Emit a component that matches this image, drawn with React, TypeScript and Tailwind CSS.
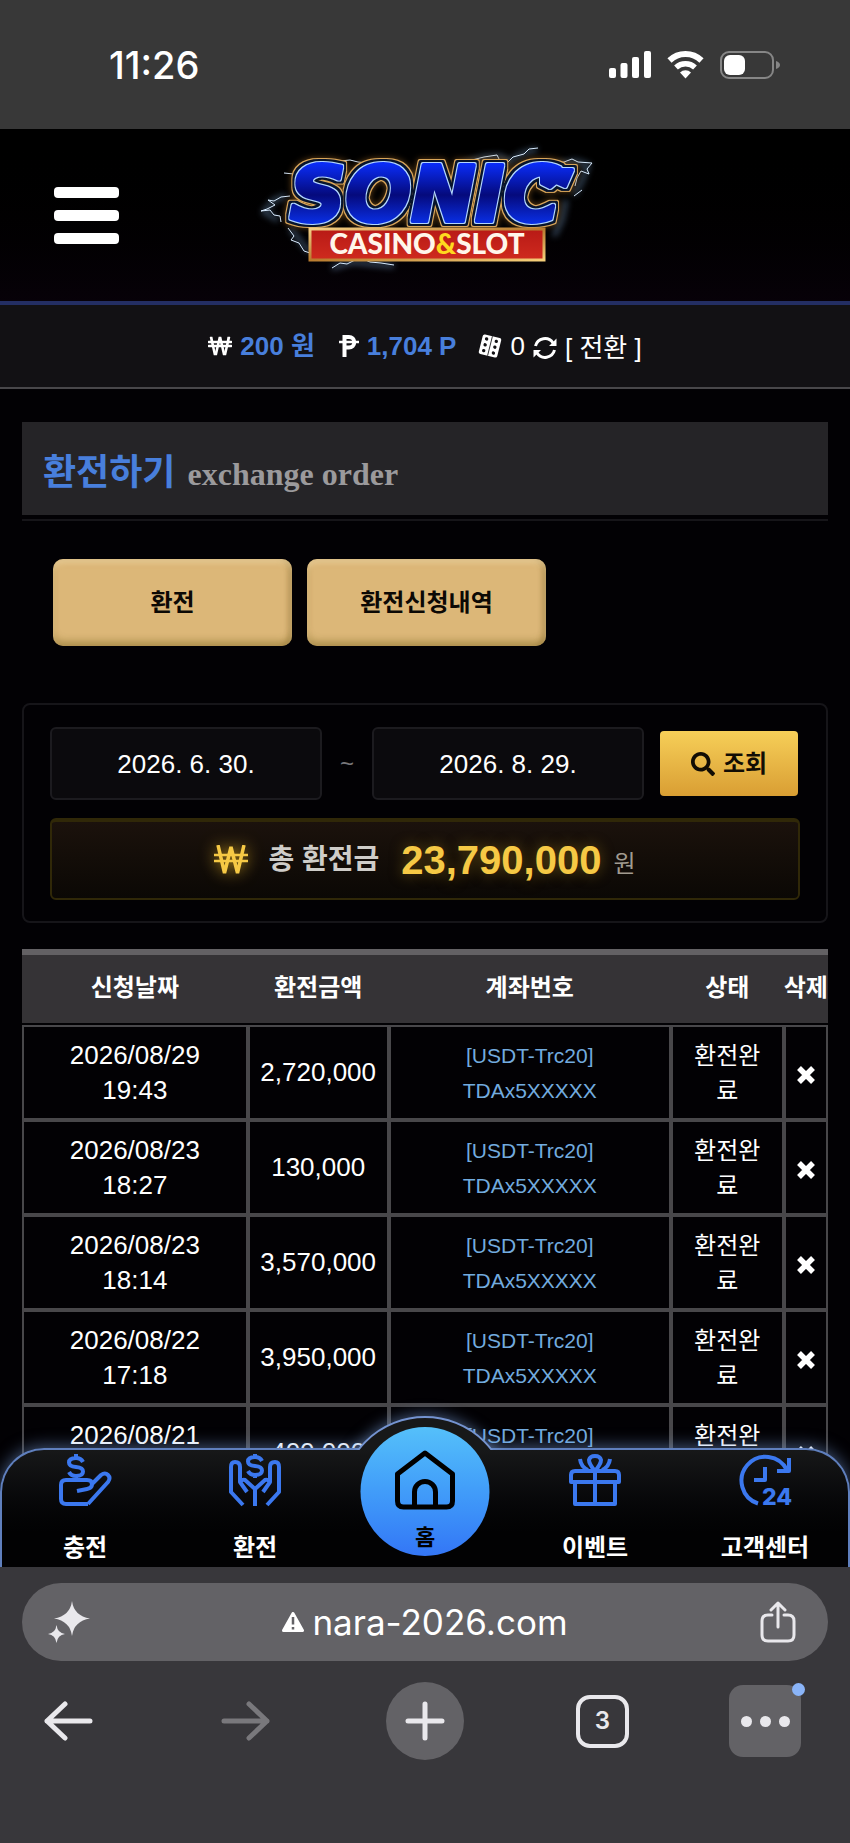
import type { ReactNode } from "react";
import { FaSearch, FaWonSign } from "react-icons/fa";

const WITHDRAWALS = [
  { date: "2026/08/29", time: "19:43", amount: "2,720,000" },
  { date: "2026/08/23", time: "18:27", amount: "130,000" },
  { date: "2026/08/23", time: "18:14", amount: "3,570,000" },
  { date: "2026/08/22", time: "17:18", amount: "3,950,000" },
  { date: "2026/08/21", time: "16:52", amount: "400,000" },
];

const COLUMNS = [
  { label: "신청날짜", width: "w-[28%]" },
  { label: "환전금액", width: "w-[17.5%]" },
  { label: "계좌번호", width: "w-[35%]" },
  { label: "상태", width: "w-[14%]" },
  { label: "삭제", width: "w-[5.5%]" },
];

const CELL = "h-[95px] border-2 border-[#48474a] p-0 text-center";

function StatusBar() {
  return (
    <div className="flex h-[129px] shrink-0 items-center justify-between bg-[#383838] pl-[109px] pr-[70px] font-['Inter','Liberation_Sans',sans-serif] text-white">
      <span className="text-[38px] font-medium leading-none">11:26</span>
      <div className="flex items-center gap-4">
        <svg viewBox="0 0 42 28" className="h-7 w-[42px]" fill="currentColor" aria-hidden="true">
          <rect x="0" y="17" width="7" height="10" rx="2" />
          <rect x="11.500" y="12" width="7" height="15" rx="2" />
          <rect x="23" y="6" width="7" height="21" rx="2" />
          <rect x="35" y="0" width="7" height="27" rx="2" />
        </svg>
        <svg viewBox="0 0 37 28" className="h-7 w-[37px]" fill="none" aria-hidden="true">
          <path d="M2.500 9.500a23 23 0 0 1 32 0" stroke="currentColor" strokeWidth="6" />
          <path d="M9 16.500a14 14 0 0 1 19 0" stroke="currentColor" strokeWidth="5.500" />
          <path d="M13 21.500a8 8 0 0 1 11 0L18.500 27.500z" fill="currentColor" />
        </svg>
        <svg viewBox="0 0 60 28" className="h-7 w-[60px]" aria-hidden="true">
          <rect x="1" y="1" width="52" height="26" rx="8" fill="none" stroke="#868686" strokeWidth="2" />
          <rect x="4" y="4" width="21" height="20" rx="6" fill="white" />
          <path d="M56 10q4 1.500 4 4t-4 4z" fill="#868686" />
        </svg>
      </div>
    </div>
  );
}

function Logo() {
  return (
    <svg viewBox="0 0 370 170" className="h-[170px] w-[370px]" role="img" aria-label="Sonic Casino & Slot">
      <defs>
        <linearGradient id="logoBlue" gradientUnits="userSpaceOnUse" x1="0" y1="34" x2="0" y2="96">
          <stop offset="0" stopColor="#0a2cf5" />
          <stop offset="0.5" stopColor="#050a7c" />
          <stop offset="1" stopColor="#0a32ee" />
        </linearGradient>
        <linearGradient id="logoGold" x1="0" y1="0" x2="1" y2="1">
          <stop offset="0" stopColor="#f3cf85" />
          <stop offset="0.5" stopColor="#b87a2e" />
          <stop offset="1" stopColor="#f5cf7a" />
        </linearGradient>
        <linearGradient id="logoRed" x1="0" y1="0" x2="0" y2="1">
          <stop offset="0" stopColor="#b81a16" />
          <stop offset="1" stopColor="#cf2a1e" />
        </linearGradient>
        <filter id="logoGlow" x="-20%" y="-20%" width="140%" height="140%">
          <feGaussianBlur stdDeviation="3" />
        </filter>
        {/* rings round the lettering: light blue, navy, gold, then a warm glow */}
        <filter id="logoOutline" x="-10%" y="-30%" width="120%" height="160%" colorInterpolationFilters="sRGB">
          <feMorphology in="SourceAlpha" operator="dilate" radius="1" result="a1" />
          <feMorphology in="SourceAlpha" operator="dilate" radius="3" result="a2" />
          <feMorphology in="SourceAlpha" operator="dilate" radius="4" result="a3" />
          <feGaussianBlur in="a3" stdDeviation="3" result="a4" />
          <feFlood floodColor="#b3d6ff" />
          <feComposite in2="a1" operator="in" result="light" />
          <feFlood floodColor="#07142c" />
          <feComposite in2="a2" operator="in" result="navy" />
          <feFlood floodColor="#d9a65a" />
          <feComposite in2="a3" operator="in" result="gold" />
          <feFlood floodColor="#8a5a20" floodOpacity="0.7" />
          <feComposite in2="a4" operator="in" result="glow" />
          <feMerge>
            <feMergeNode in="glow" />
            <feMergeNode in="gold" />
            <feMergeNode in="navy" />
            <feMergeNode in="light" />
            <feMergeNode in="SourceGraphic" />
          </feMerge>
        </filter>
      </defs>

      {/* lightning behind the lettering */}
      <g fill="none" stroke="#7da7d4" strokeWidth="4" filter="url(#logoGlow)" opacity="0.5">
        <path d="M218 36l26-9 16-1 9 6 12-8 16-5M46 66l-12 4-10 12 14 8M50 98l14 18 6 6M92 138l20-6 20 2 22 2" />
        <path d="M318 34l18-3 12 4-6 16-8 14M326 70l-4 20-8 16" />
      </g>
      <g fill="none" stroke="#d9ecff" strokeWidth="1">
        <path d="M218 36l14-6 12-3 13-2 3 6 8 1 5-5 11-3 5-5 9-1" />
        <path d="M50 66l-9 1-7 4-6-1 7 5-8 4-6 2 9-1 4 5 6 1 1 6" />
        <path d="M48 98l6 8-3 4 8 3 5 8 6 2M92 138l8-5 7 1 8-4 6-2 9 4 11 1 13 2" />
        <path d="M310 34l14-2 8-3 6 3 14 1-5 6 2 5-8-3-4 7-2 8M100 31l10-1 8 2 10 1M44 43l10 1M66 30l4 6M342 60l-8 6" />
      </g>

      <g
        filter="url(#logoOutline)"
        fill="url(#logoBlue)"
        stroke="url(#logoBlue)"
        strokeWidth="4"
        strokeLinejoin="round"
      >
        <text
          x="50"
          y="91"
          fontFamily="'DejaVu Sans', sans-serif"
          fontWeight="700"
          fontStyle="italic"
          fontSize="77"
        >
          SONIC
        </text>
        <path d="M302 40h30l-7 16-9-4-6 5-8-4z" />
      </g>

      <rect x="70" y="99" width="234" height="31" fill="url(#logoRed)" stroke="url(#logoGold)" strokeWidth="3" />
      <text
        x="187"
        y="124"
        textAnchor="middle"
        fontFamily="Lato, 'Liberation Sans', sans-serif"
        fontWeight="900"
        fontSize="28"
        fill="#fff6ea"
      >
        CASINO<tspan fill="#ffd91f">&amp;</tspan>SLOT
      </text>
    </svg>
  );
}

function Header() {
  return (
    <header className="grid h-[176px] shrink-0 grid-cols-[1fr_auto_1fr] items-center border-b-4 border-[#232e63] bg-linear-to-b from-black to-[#070108] pl-[54px]">
      <button type="button" aria-label="메뉴" className="flex w-[65px] flex-col gap-3">
        <span className="h-[11px] w-full rounded-sm bg-white" />
        <span className="h-[11px] w-full rounded-sm bg-white" />
        <span className="h-[11px] w-full rounded-sm bg-white" />
      </button>
      <a href="#home" className="block pr-[54px]">
        <Logo />
      </a>
    </header>
  );
}

function PointIcon() {
  return (
    <svg viewBox="0 0 20 22" className="h-[22px] w-5" fill="none" stroke="currentColor" aria-hidden="true">
      <path d="M5.500 22V2H10a5 5 0 0 1 0 10.500H5" strokeWidth="4" />
      <path d="M0 7h20" strokeWidth="2.500" />
    </svg>
  );
}

function DiceIcon() {
  return (
    <svg viewBox="0 0 24 24" className="h-6 w-6" aria-hidden="true">
      <g transform="rotate(14 12 12)">
        <rect x="2.500" y="2" width="19" height="20" rx="2" fill="white" />
        <path d="M12 2v20" stroke="#121114" strokeWidth="0.800" />
        <g fill="#121114">
          <circle cx="7" cy="6" r="1.700" />
          <circle cx="7" cy="12" r="1.700" />
          <circle cx="7" cy="18" r="1.700" />
          <circle cx="17" cy="6" r="1.700" />
          <circle cx="17" cy="12" r="1.700" />
          <circle cx="17" cy="18" r="1.700" />
        </g>
      </g>
    </svg>
  );
}

function ConvertIcon() {
  return (
    <svg viewBox="0 0 24 24" className="h-6 w-6" fill="none" stroke="currentColor" strokeWidth="3" aria-hidden="true">
      <path d="M2.500 10A9.700 9.700 0 0 1 20 7" />
      <path d="M21.500 14A9.700 9.700 0 0 1 4 17" />
      <path d="M23.500 2.500V10H16zM.5 21.500V14H8z" fill="currentColor" stroke="none" />
    </svg>
  );
}

function DeleteIcon() {
  return (
    <svg viewBox="0 0 18 18" className="h-[18px] w-[18px]" stroke="currentColor" strokeWidth="5.500" aria-hidden="true">
      <path d="M2 2l14 14M16 2L2 16" />
    </svg>
  );
}

function BalanceBar() {
  return (
    <div className="flex h-[84px] shrink-0 items-center justify-center border-b-2 border-[#48474a] bg-[#121114] text-[26px] text-white">
      <FaWonSign className="h-6 w-6" />
      <span className="ml-2 font-bold text-[#487fdc]">200 원</span>
      <span className="ml-6">
        <PointIcon />
      </span>
      <span className="ml-2 font-bold text-[#487fdc]">1,704 P</span>
      <span className="ml-[22px]">
        <DiceIcon />
      </span>
      <span className="ml-2">0</span>
      <button type="button" className="ml-2 flex items-center gap-2 pt-1">
        <ConvertIcon />
        <span>[ 전환 ]</span>
      </button>
    </div>
  );
}

function TabButton({ children }: { children: ReactNode }) {
  return (
    <button
      type="button"
      className="h-[87px] w-[239px] rounded-[10px] bg-[#dcb778] text-[24px] font-bold text-[#0c0905] shadow-[inset_0_4px_5px_rgba(255,240,200,0.35),inset_0_-6px_6px_rgba(120,100,30,0.35),inset_-4px_0_5px_rgba(120,90,30,0.3)]"
    >
      {children}
    </button>
  );
}

function DateInput({ label, value }: { label: string; value: string }) {
  return (
    <input
      type="text"
      aria-label={label}
      defaultValue={value}
      className="h-[73px] min-w-0 flex-1 rounded-md border-2 border-[#1c1b1f] bg-[#0b0a0d] pt-0.5 text-center text-[26px] text-white"
    />
  );
}

function SearchPanel() {
  return (
    <section className="mt-[57px] rounded-lg border-2 border-[#161519] px-[26px] pb-[21px] pt-[22px]">
      <form className="flex items-center pr-0.5">
        <DateInput label="시작일" value="2026. 6. 30." />
        <span className="w-[50px] text-center text-[24px] text-[#77767a]">~</span>
        <DateInput label="종료일" value="2026. 8. 29." />
        <button
          type="button"
          className="ml-4 flex h-[65px] w-[138px] items-center justify-center gap-2 rounded-sm bg-linear-to-b from-[#f6cf58] to-[#d99e33] text-[24px] font-bold text-[#120d04]"
        >
          <FaSearch className="h-6 w-6" />
          조회
        </button>
      </form>
      <div className="mt-[18px] flex h-[82px] items-center justify-center rounded-md border-2 border-t-4 border-[#302808] bg-linear-to-b from-[#1b120c] to-[#0b0805]">
        <svg
          viewBox="0 0 34 30"
          className="h-[30px] w-[34px] drop-shadow-[0_0_8px_#b98f1e]"
          fill="none"
          stroke="#f6c945"
          strokeWidth="3.500"
          aria-hidden="true"
        >
          <path d="M4 0l6.500 28L17 2l6.500 26L30 0" strokeLinejoin="bevel" />
          <path d="M0 10h34M0 16h34" strokeWidth="2.500" />
        </svg>
        <span className="ml-5 text-[28px] font-bold text-[#cfcdc9]">총 환전금</span>
        <span className="ml-[22px] text-[40px] font-bold text-[#f6c945] [text-shadow:0_0_14px_rgba(185,143,30,0.5)]">
          23,790,000
        </span>
        <span className="ml-3 mt-2 text-[24px] text-[#a19b90]">원</span>
      </div>
    </section>
  );
}

function HistoryTable() {
  return (
    <table className="mt-[26px] w-full table-fixed border-separate border-spacing-0 text-white">
      <thead>
        <tr>
          {COLUMNS.map((col) => (
            <th
              key={col.label}
              className={`${col.width} h-[74px] whitespace-nowrap border-t-[6px] border-[#636164] bg-[#353336] p-0 pb-0.5 text-[24px] font-bold`}
            >
              {col.label}
            </th>
          ))}
        </tr>
        <tr aria-hidden="true">
          <td colSpan={5} className="h-[2px] p-0" />
        </tr>
      </thead>
      <tbody>
        {WITHDRAWALS.map((row) => (
          <tr key={`${row.date} ${row.time}`}>
            <td className={`${CELL} text-[26px] leading-[35px]`}>
              {row.date}
              <br />
              {row.time}
            </td>
            <td className={`${CELL} text-[26px]`}>{row.amount}</td>
            <td className={`${CELL} text-[21px] leading-[35px] text-[#72abdf]`}>
              [USDT-Trc20]
              <br />
              TDAx5XXXXX
            </td>
            <td className={`${CELL} text-[24px] leading-[35px]`}>
              환전완
              <br />료
            </td>
            <td className={CELL}>
              <button type="button" aria-label="삭제" className="pt-3">
                <DeleteIcon />
              </button>
            </td>
          </tr>
        ))}
      </tbody>
    </table>
  );
}

function NavIcon({ children }: { children: ReactNode }) {
  return (
    <svg
      viewBox="0 0 52 52"
      className="h-[52px] w-[52px] overflow-visible"
      fill="none"
      stroke="#3b78ef"
      strokeWidth="4"
      strokeLinejoin="round"
      aria-hidden="true"
    >
      {children}
    </svg>
  );
}

function DepositIcon() {
  return (
    <NavIcon>
      <path d="M24 8q-2-4-7-4-7 0-7 4.500 0 4 7 4.500t7 4.500q0 4.500-7 4.500-5 0-7-4M17 0v4M17 21v5" />
      <path d="M29 50H7q-5 0-5-5V31q0-5 5-5h21q5 0 5 4t-5 5l-10 2" />
      <path d="M32 31l10-10q4-3 7 0t0 7L29 50" />
    </NavIcon>
  );
}

function WithdrawIcon() {
  return (
    <NavIcon>
      <path d="M33 7q-2-4-7-4-7 0-7 4.500 0 4 7 4.500t7 4.500q0 4.500-7 4.500-5 0-7-4M26 0v3M26 21v3" />
      <path d="M14 51L2 38V13q0-5 4-5 5 0 5 5v15l7 10" />
      <path d="M38 51l12-13V13q0-5-4-5-5 0-5 5v15l-7 10" />
      <path d="M26 52V35L16 26q-3-1-5 2M26 35l10-9q3-1 5 2" />
    </NavIcon>
  );
}

function GiftIcon() {
  return (
    <NavIcon>
      <path d="M2 28V21q0-4 4-4h40q4 0 4 4v7zM6 28v22h40V28M26 17v33" />
      <path d="M26 17q-6-7-6-11 1-4 6-4t6 4q0 4-6 11zM11 5q1 8 8 11M41 5q-1 8-8 11" />
    </NavIcon>
  );
}

function SupportIcon() {
  return (
    <NavIcon>
      <path d="M19 49.500A24 24 0 1 1 48 16M38 17h12V4M26 13v13H15" />
      <text
        x="23"
        y="51"
        fontFamily="Inter, 'Liberation Sans', sans-serif"
        fontSize="23"
        fontWeight="800"
        fill="#3b78ef"
        stroke="none"
      >
        24
      </text>
    </NavIcon>
  );
}

const NAV_ITEMS = [
  { label: "충전", href: "#deposit", icon: DepositIcon },
  { label: "환전", href: "#withdraw", icon: WithdrawIcon },
  null,
  { label: "이벤트", href: "#event", icon: GiftIcon },
  { label: "고객센터", href: "#support", icon: SupportIcon },
];

function BottomNav() {
  return (
    <nav className="absolute inset-x-0 bottom-0">
      <div className="h-[119px] rounded-t-[44px] border-x-2 border-t-2 border-[#5f7fbd] bg-linear-to-b from-[#171819] to-[#020203] to-70% shadow-[0_-2px_16px_rgba(125,165,225,0.5)]" />
      {/* raised arc around the home button */}
      <div className="absolute inset-x-0 -top-14 h-[58px] overflow-hidden">
        <div className="mx-auto mt-6 h-[170px] w-[170px] rounded-full border-2 border-[#7493d0] bg-[#171819] shadow-[0_-2px_14px_rgba(125,165,225,0.5)]" />
      </div>
      <ul className="absolute inset-0 grid grid-cols-5">
        {NAV_ITEMS.map((item) =>
          item ? (
            <li key={item.href}>
              <a href={item.href} className="flex flex-col items-center gap-[26px] pt-[6px] text-[24px] font-bold text-white">
                <item.icon />
                <span className="leading-8">{item.label}</span>
              </a>
            </li>
          ) : (
            <li key="home" className="relative">
              <a
                href="#home"
                className="absolute -top-[21px] left-1/2 flex h-[129px] w-[129px] -translate-x-1/2 flex-col items-center rounded-full bg-linear-to-b from-[#55c0fa] to-[#3476f6] pt-[23px] text-[22px] font-bold text-black"
              >
                <svg
                  viewBox="0 0 61 60"
                  className="h-[60px] w-[61px]"
                  fill="none"
                  stroke="currentColor"
                  strokeWidth="5"
                  strokeLinejoin="round"
                  aria-hidden="true"
                >
                  <path d="M30.500 3L3 24v27q0 6 6 6h43q6 0 6-6V24z" />
                  <path d="M20 57V42a10.500 10.500 0 0 1 21 0v15" />
                </svg>
                <span className="mt-3 leading-8">홈</span>
              </a>
            </li>
          )
        )}
      </ul>
    </nav>
  );
}

function BrowserToolbar() {
  return (
    <footer className="h-[276px] shrink-0 bg-[#38373b] px-[22px] pt-4 font-['Inter','Liberation_Sans',sans-serif] text-[#e9e8ec]">
      <div className="flex h-[78px] items-center justify-between rounded-full bg-[#636266] px-[26px]">
        <button type="button" aria-label="AI">
          <svg viewBox="0 0 42 42" className="h-[42px] w-[42px]" fill="currentColor" aria-hidden="true">
            <path d="M24 0q2 15 18 17.500-16 2.500-18 17.500-2-15-18-17.500Q22 15 24 0z" />
            <path d="M8.500 24q1 8 8.500 9-7.500 1-8.500 9-1-8-8.500-9 7.500-1 8.500-9z" />
          </svg>
        </button>
        <div className="flex items-center gap-2 text-[35px] text-white">
          <svg viewBox="0 0 22 20" className="h-5 w-[22px]" aria-hidden="true">
            <path d="M11 1.500L20.500 18.500h-19z" fill="white" stroke="white" strokeWidth="3" strokeLinejoin="round" />
            <path d="M11 5v7.500M11 15v2.500" stroke="#636266" strokeWidth="2.500" />
          </svg>
          <span className="leading-none">nara-2026.com</span>
        </div>
        <button type="button" aria-label="공유" className="pr-1.5">
          <svg
            viewBox="0 0 36 42"
            className="h-[42px] w-9"
            fill="none"
            stroke="currentColor"
            strokeWidth="3"
            strokeLinecap="round"
            strokeLinejoin="round"
            aria-hidden="true"
          >
            <path d="M12 14H8q-6 0-6 6v14q0 6 6 6h20q6 0 6-6V20q0-6-6-6h-4M18 26V2M11 9l7-7 7 7" />
          </svg>
        </button>
      </div>
      <div className="mt-[21px] flex items-center justify-between pl-[22px] pr-[27px]">
        <button type="button" aria-label="뒤로">
          <svg viewBox="0 0 49 40" className="h-10 w-[49px]" fill="none" stroke="currentColor" strokeWidth="5" strokeLinecap="round" strokeLinejoin="round" aria-hidden="true">
            <path d="M46 20H3M21 3L3 20l18 17" />
          </svg>
        </button>
        <button type="button" aria-label="앞으로" disabled className="ml-7 text-[#79787c]">
          <svg viewBox="0 0 49 40" className="h-10 w-[49px]" fill="none" stroke="currentColor" strokeWidth="5" strokeLinecap="round" strokeLinejoin="round" aria-hidden="true">
            <path d="M3 20h43M28 3l18 17-18 17" />
          </svg>
        </button>
        <button type="button" aria-label="새 탭" className="ml-4 flex h-[78px] w-[78px] items-center justify-center rounded-full bg-[#636266]">
          <svg viewBox="0 0 40 40" className="h-10 w-10" stroke="currentColor" strokeWidth="5" strokeLinecap="round" aria-hidden="true">
            <path d="M20 3v34M3 20h34" />
          </svg>
        </button>
        <button type="button" aria-label="탭" className="ml-3 flex h-[53px] w-[53px] items-center justify-center rounded-[14px] border-4 border-current text-[24px] font-semibold">
          3
        </button>
        <button type="button" aria-label="더보기" className="relative flex h-[72px] w-[72px] items-center justify-center gap-2 rounded-[14px] bg-[#636266]">
          <span className="h-[11px] w-[11px] rounded-full bg-current" />
          <span className="h-[11px] w-[11px] rounded-full bg-current" />
          <span className="h-[11px] w-[11px] rounded-full bg-current" />
          <span className="absolute -right-1 -top-0.5 h-[13px] w-[13px] rounded-full bg-[#8ab4f8]" />
        </button>
      </div>
    </footer>
  );
}

export default function App() {
  return (
    <div className="flex h-screen flex-col bg-[#020104] font-['Liberation_Sans','Noto_Sans_CJK_KR',sans-serif]">
      <StatusBar />
      <div className="relative flex min-h-0 flex-1 flex-col overflow-hidden">
        <Header />
        <BalanceBar />
        <main className="px-[22px] pt-[33px]">
          <h1 className="flex h-[93px] items-baseline gap-3 bg-[#252427] pl-[21px] pt-6 text-[36px] font-bold leading-[54px] text-[#487fdc]">
            환전하기
            <span className="font-['Liberation_Serif',serif] text-[32px] text-[#9b9a9c]">exchange order</span>
          </h1>
          <hr className="mt-1 border-t-2 border-[#161519]" />
          <div className="mt-[38px] flex gap-[15px] pl-[31px]">
            <TabButton>환전</TabButton>
            <TabButton>환전신청내역</TabButton>
          </div>
          <SearchPanel />
          <HistoryTable />
        </main>
        <BottomNav />
      </div>
      <BrowserToolbar />
    </div>
  );
}
